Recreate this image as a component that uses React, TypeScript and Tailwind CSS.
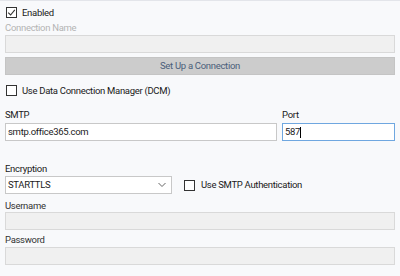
import React from "react";

const font = { fontFamily: 'Roboto, "Noto Sans", sans-serif' };

function Check({ checked }: { checked?: boolean }) {
  return (
    <span className="w-[11px] h-[11px] border border-[#333] bg-white flex items-center justify-center shrink-0">
      {checked && (
        <svg width="9" height="9" viewBox="0 0 9 9">
          <path d="M1.2 4.6 L3.6 7 L7.8 1.8" fill="none" stroke="#333" strokeWidth="1.1" />
        </svg>
      )}
    </span>
  );
}

function Disabled({ className = "" }: { className?: string }) {
  return <div className={`h-[18px] border border-[#d9d9d9] bg-[#f0f0f0] ${className}`} />;
}

export default function App() {
  return (
    <div className="w-[400px] h-[276px] bg-[#f8f9fb] text-[9.5px] tracking-[-0.3px] leading-[12px] text-[#1a1a1a] border-t border-[#e3e5ea] overflow-hidden" style={font}>
      <div className="flex flex-col px-[5px]">
        {/* Enabled */}
        <label className="flex items-center gap-[5px] pl-[1px] mt-[6px] h-[11px]">
          <Check checked />
          <span>Enabled</span>
        </label>
        <div className="mt-[4px] h-[12px] text-[#b4b4b4]">Connection Name</div>
        <Disabled className="mt-[1px] h-[17px]" />
        <div className="mt-[4px] h-[18px] bg-[#cccccc] border border-[#c4c4c4] flex items-center justify-center text-[#4a5e7a]">
          Set Up a Connection
        </div>

        {/* DCM */}
        <label className="flex items-center gap-[5px] pl-[1px] mt-[10px] h-[11px]">
          <Check />
          <span>Use Data Connection Manager (DCM)</span>
        </label>

        {/* SMTP + Port */}
        <div className="flex gap-[5px] mt-[13px]">
          <div className="flex flex-col w-[272px]">
            <div className="h-[12px]">SMTP</div>
            <div className="mt-[2px] h-[18px] border border-[#c8c8c8] bg-white px-[2px] flex items-center">smtp.office365.com</div>
          </div>
          <div className="flex flex-col flex-1">
            <div className="h-[12px]">Port</div>
            <div className="mt-[2px] h-[18px] border border-[#6fa7e0] bg-white px-[2px] flex items-center">
              587<span className="w-px h-[11px] bg-black" />
            </div>
          </div>
        </div>

        {/* Encryption */}
        <div className="mt-[22px] h-[12px]">Encryption</div>
        <div className="flex items-center mt-[1px]">
          <div className="w-[167px] h-[18px] border border-[#c8c8c8] bg-white px-[2px] flex items-center justify-between">
            <span>STARTTLS</span>
            <svg width="10" height="8" viewBox="0 0 10 8" className="mr-[2px]">
              <path d="M1.5 2 L5 5.5 L8.5 2" fill="none" stroke="#666" strokeWidth="1" />
            </svg>
          </div>
          <label className="flex items-center gap-[6px] ml-[12px]">
            <Check />
            <span>Use SMTP Authentication</span>
          </label>
        </div>

        <div className="mt-[6px] h-[12px] text-[#333]">Username</div>
        <Disabled />
        <div className="mt-[4px] h-[12px] text-[#333]">Password</div>
        <Disabled className="mt-[1px]" />
      </div>
    </div>
  );
}
